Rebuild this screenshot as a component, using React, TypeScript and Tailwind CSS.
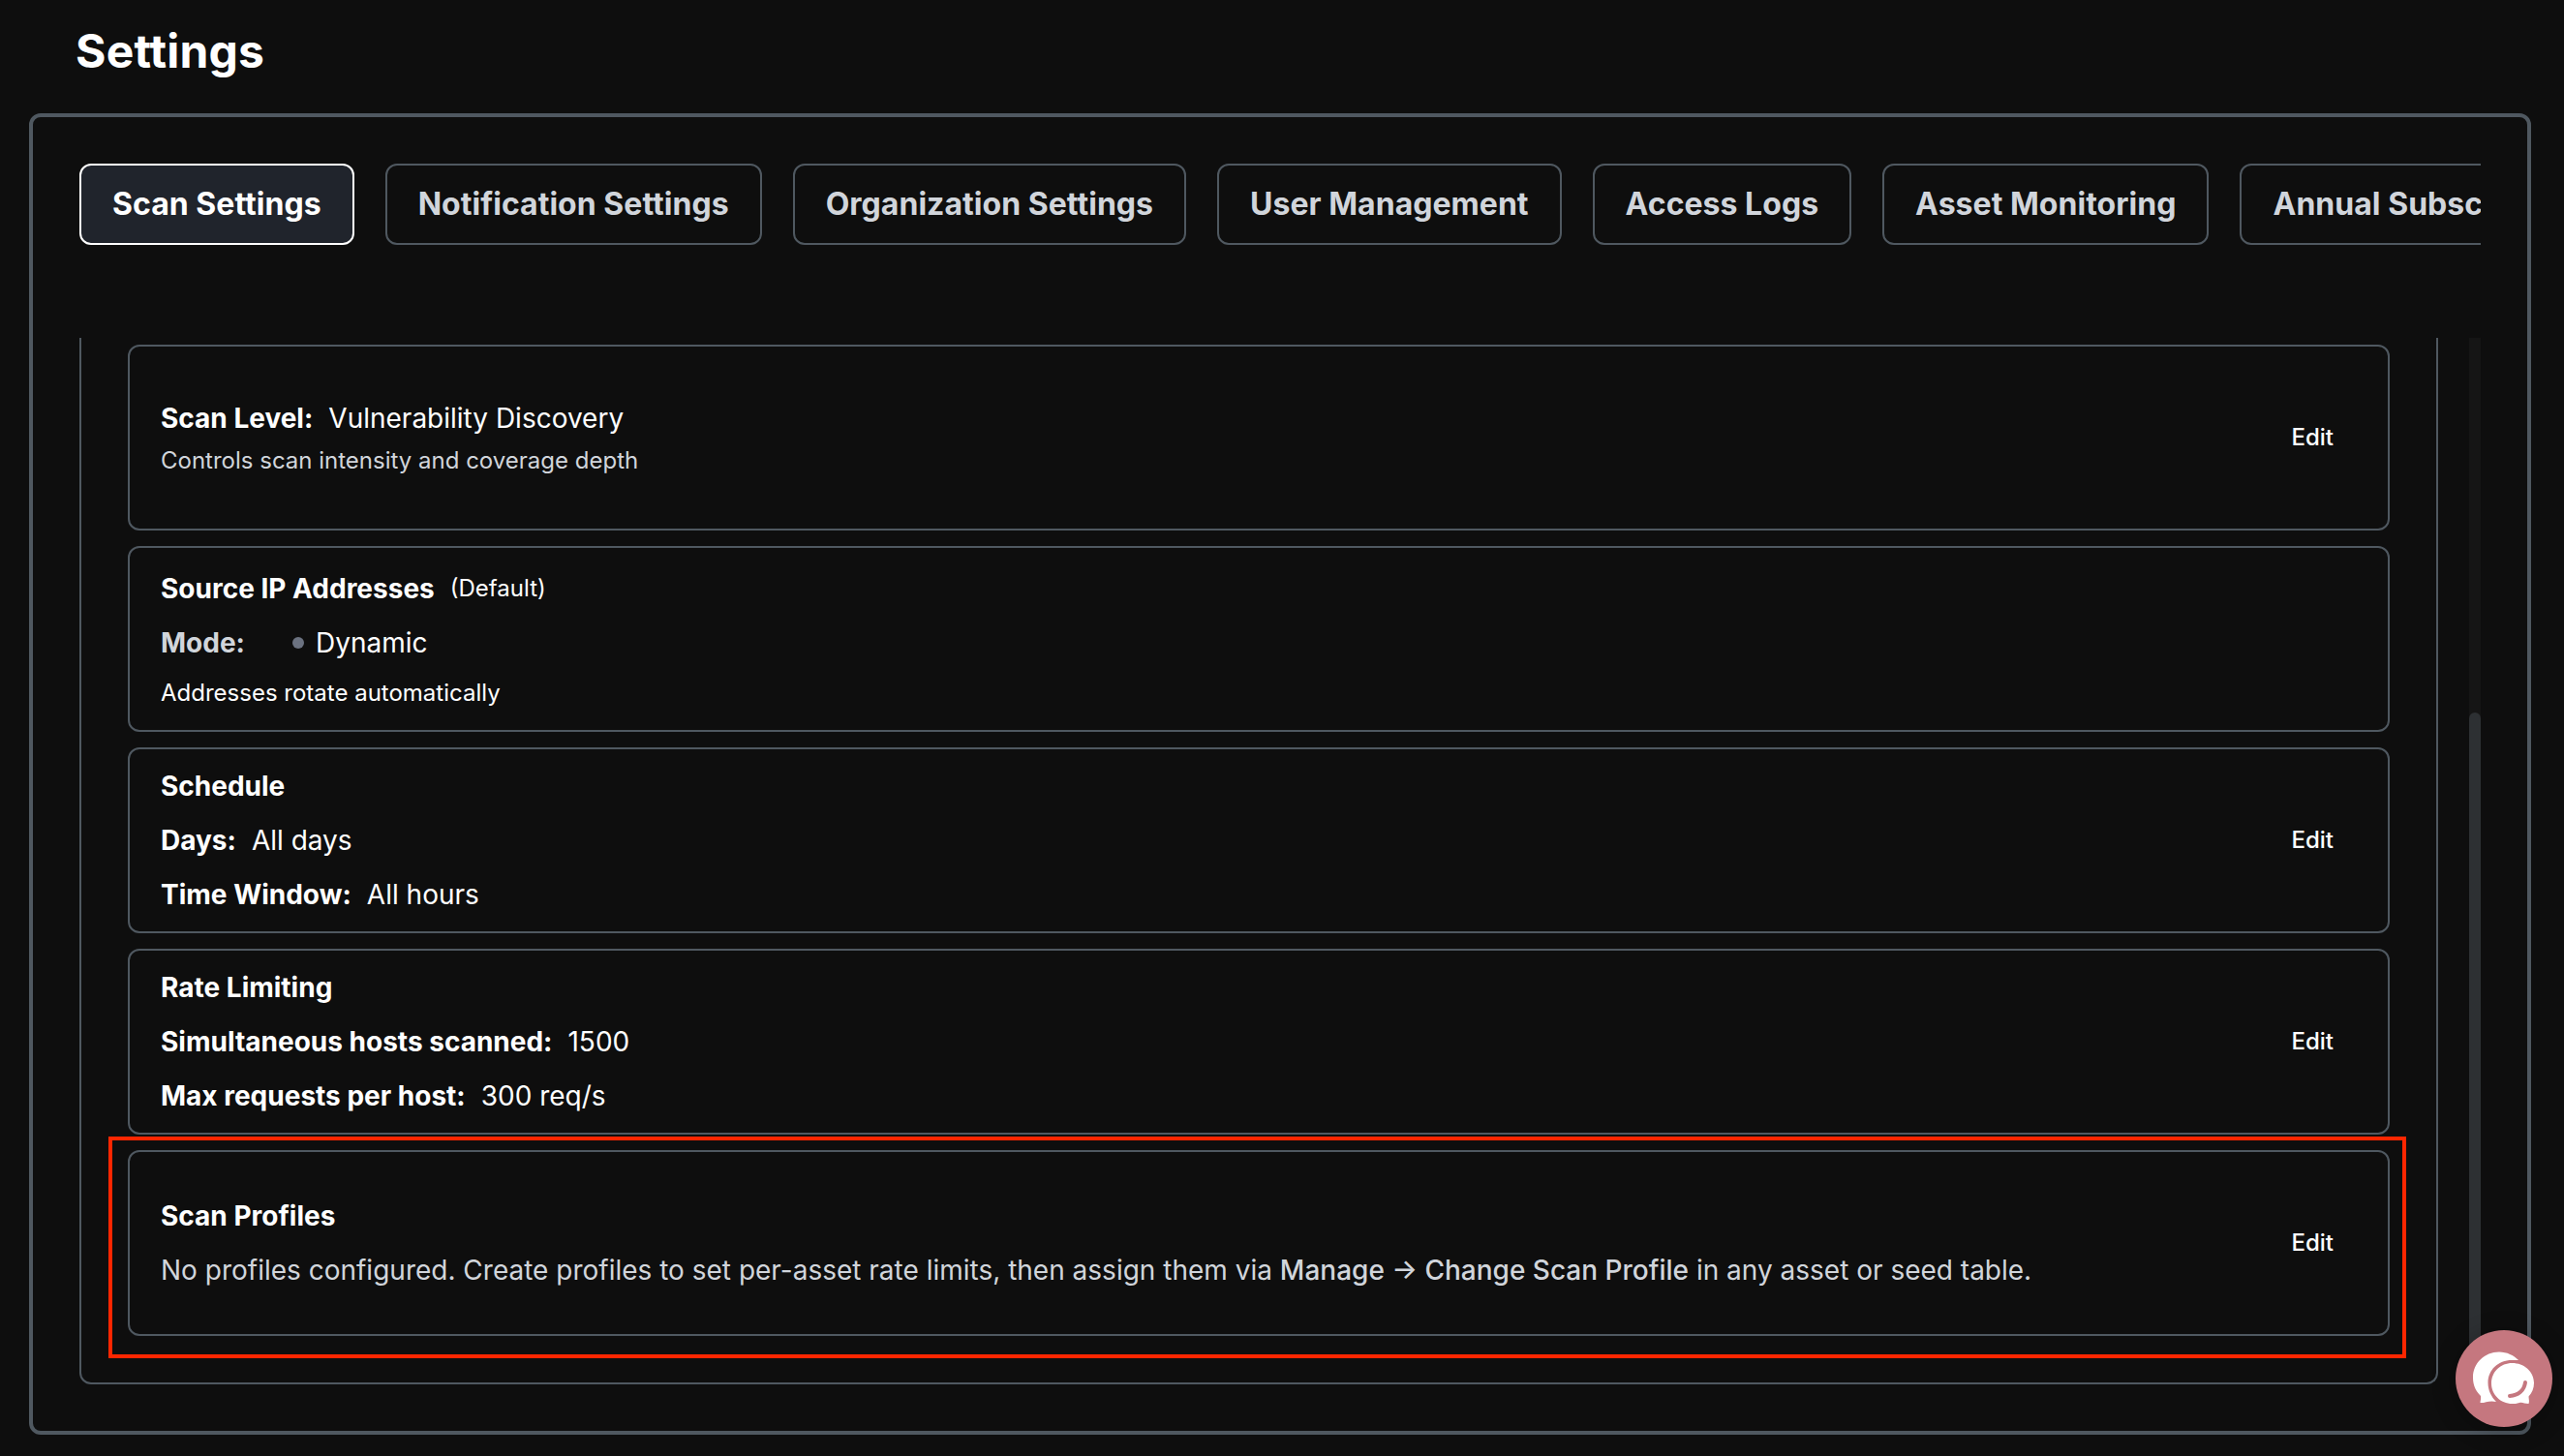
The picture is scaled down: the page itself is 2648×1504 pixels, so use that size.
import type { ReactNode } from 'react';

const TABS = [
  'Scan Settings',
  'Notification Settings',
  'Organization Settings',
  'User Management',
  'Access Logs',
  'Asset Monitoring',
  'Annual Subscription',
];

function Card({ editable = true, children }: { editable?: boolean; children: ReactNode }) {
  return (
    <section className="flex h-48 items-center justify-between rounded-xl border-2 border-[#4f5860] px-8">
      <div>{children}</div>
      {editable && (
        <button className="px-6 text-2xl leading-8 font-medium text-white">Edit</button>
      )}
    </section>
  );
}

function Field({ label, value }: { label: string; value: string }) {
  return (
    <div className="mt-4 flex gap-4">
      <span className="font-bold">{label}</span>
      <span>{value}</span>
    </div>
  );
}

function ChatButton() {
  return (
    <button
      aria-label="Open chat"
      className="absolute top-[1374px] left-[2536px] size-[100px] rounded-full bg-[#c5777f] shadow-[0_4px_24px_rgba(0,0,0,0.3)]"
    >
      <svg viewBox="0 0 100 100" className="size-full">
        <path
          d="M65 31 C60 26 53 22.500 45 22.500 C30 22.500 18 34 18 49 C18 57 21 63 26 68 C26.500 71 25.500 73 25.500 75 C30 75.500 35 72 42 74 C37 69 33.500 62 33.500 54.500 C33.500 41 44 31 58 31 Z"
          fill="#fff"
        />
        <path
          d="M58.500 34 C70.500 34 81 42.500 81 54.500 C81 60 79 65 75.500 68.500 C75.500 71.500 76.500 73 75.500 76 C71 76 69 74 66 75 C63 76 61 76 58.500 76 C46.500 76 37 66.500 37 55 C37 43 46.500 34 58.500 34 Z"
          fill="#fff"
        />
        <path d="M72 54 C71 62 65 67.500 56 68" fill="none" stroke="#c5777f" strokeWidth="4" strokeLinecap="round" />
      </svg>
    </button>
  );
}

export default function App() {
  return (
    <div className="relative h-[1504px] w-[2648px] overflow-hidden bg-[#0e0e0e] font-['Inter',sans-serif] text-white">
      <h1 className="h-[117px] pt-[25px] pl-[78px] text-5xl leading-[56px] font-bold tracking-[0.2px]">Settings</h1>

      <main className="mr-[34px] ml-[30px] flex h-[1365px] flex-col gap-24 rounded-xl border-4 border-[#4f5860] p-12">
        <nav className="flex shrink-0 gap-8 overflow-hidden">
          {TABS.map((tab, i) => (
            <button
              key={tab}
              className={
                i === 0
                  ? 'shrink-0 rounded-xl border-2 border-white bg-[#20242c] px-8 py-4 text-[32px] leading-[48px] font-bold tracking-[0.03px] text-white'
                  : 'shrink-0 rounded-xl border-2 border-[#4f5860] px-8 py-4 text-[32px] leading-[48px] font-bold tracking-[0.03px] text-[#d1d5db]'
              }
            >
              {tab}
            </button>
          ))}
        </nav>

        <div className="flex min-h-0 grow gap-8">
          <div className="flex grow flex-col gap-4 rounded-b-xl border-2 border-t-0 border-[#4f5860] px-12 pt-[7px] pb-12">
            <Card>
              <div className="flex gap-4 text-[28px] leading-10">
                <span className="font-bold">Scan Level:</span>
                <span>Vulnerability Discovery</span>
              </div>
              <p className="mt-2 text-2xl leading-8 text-[#d1d5db]">Controls scan intensity and coverage depth</p>
            </Card>

            <Card editable={false}>
              <div className="flex items-center gap-4 text-[28px] leading-10">
                <span className="font-bold">Source IP Addresses</span>
                <span className="text-2xl">(Default)</span>
              </div>
              <div className="mt-4 flex items-center text-[28px] leading-10">
                <span className="w-[136px] font-bold text-[#d1d5db]">Mode:</span>
                <span className="mr-3 size-3 rounded-full bg-[#6b7280]" />
                <span>Dynamic</span>
              </div>
              <p className="mt-4 text-2xl leading-8">Addresses rotate automatically</p>
            </Card>

            <Card>
              <div className="text-[28px] leading-10">
                <h2 className="font-bold">Schedule</h2>
                <Field label="Days:" value="All days" />
                <Field label="Time Window:" value="All hours" />
              </div>
            </Card>

            <Card>
              <div className="text-[28px] leading-10">
                <h2 className="font-bold">Rate Limiting</h2>
                <Field label="Simultaneous hosts scanned:" value="1500" />
                <Field label="Max requests per host:" value="300 req/s" />
              </div>
            </Card>

            <Card>
              <div className="text-[28px] leading-10">
                <h2 className="font-bold">Scan Profiles</h2>
                <p className="mt-4 text-[#d1d5db]">
                  No profiles configured. Create profiles to set per-asset rate limits, then assign them via{' '}
                  <span className="font-medium">Manage → Change Scan Profile</span> in any asset or seed table.
                </p>
              </div>
            </Card>
          </div>

          {/* Scrollbar */}
          <div className="flex w-3 flex-col justify-end bg-[#151515]">
            <div className="h-[694px] rounded-full bg-[#2d3033]" />
          </div>
        </div>
      </main>

      {/* Highlight around the scan profiles card */}
      <div className="absolute top-[1174px] left-[112px] h-[229px] w-[2373px] border-4 border-[#ff2600]" />

      <ChatButton />
    </div>
  );
}
